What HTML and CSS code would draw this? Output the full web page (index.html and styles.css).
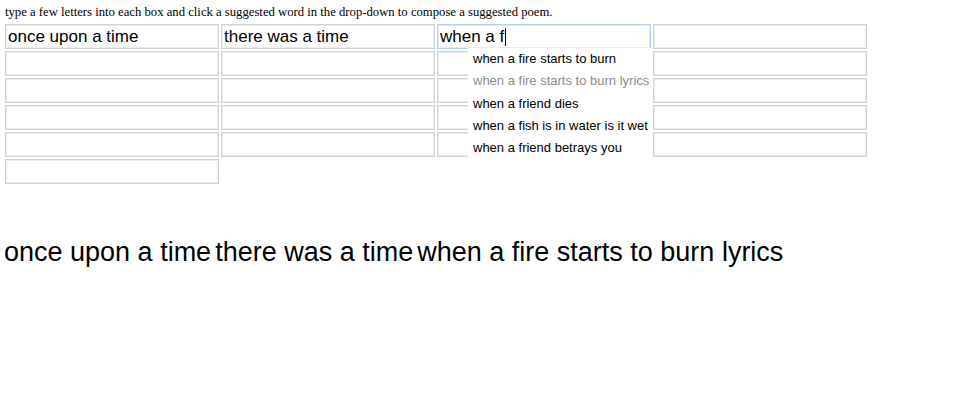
FILE: index.html
```html
<!DOCTYPE html>
<html>
<head>
<meta charset="utf-8">
<link rel="stylesheet" href="styles.css">
</head>
<body>
<p class="intro">type a few letters into each box and click a suggested word in the drop-down to compose a suggested poem.</p>
<div class="boxes">
  <input class="box" value="once upon a time">
  <input class="box" value="there was a time">
  <div class="field-wrap">
    <div class="box focused">when a f<span class="caret"></span></div>
    <ul class="suggest">
      <li>when a fire starts to burn</li>
      <li class="active">when a fire starts to burn lyrics</li>
      <li>when a friend dies</li>
      <li>when a fish is in water is it wet</li>
      <li>when a friend betrays you</li>
    </ul>
  </div>
  <input class="box" value="">
  <input class="box" value=""><input class="box" value=""><input class="box" value=""><input class="box" value="">
  <input class="box" value=""><input class="box" value=""><input class="box" value=""><input class="box" value="">
  <input class="box" value=""><input class="box" value=""><input class="box" value=""><input class="box" value="">
  <input class="box" value=""><input class="box" value=""><input class="box" value=""><input class="box" value="">
  <input class="box" value="">
</div>
<div class="poem"><span class="line">once upon a time</span><span class="line">there was a time</span><span class="line">when a fire starts to burn lyrics</span></div>
</body>
</html>
```
FILE: styles.css
```css
html, body {
  background: #fff;
}
body {
  margin: 0 5px;
  font-family: "Liberation Serif", "Times New Roman", serif;
  color: #000;
}
.intro {
  margin: 0;
  padding-top: 5px;
  height: 19px;
  font-size: 12.7px;
  line-height: 14px;
}
.boxes {
  display: flex;
  flex-wrap: wrap;
  column-gap: 2px;
  row-gap: 2px;
  width: 866px;
}
.box {
  box-sizing: border-box;
  width: 214px;
  height: 25px;
  margin: 0;
  padding: 0 2px;
  border: 1px solid #d2d2d2;
  box-shadow: inset 0 0 0 1px #ececec;
  background: #fff;
  font-family: "Liberation Sans", Arial, sans-serif;
  font-size: 17px;
  color: #000;
  outline: none;
  border-radius: 0;
}
.field-wrap {
  position: relative;
  width: 214px;
  height: 25px;
}
.focused {
  display: flex;
  align-items: center;
  border-color: #b4d0f0;
  box-shadow: inset 0 0 0 1px #e3edf9;
  white-space: pre;
}
.caret {
  display: inline-block;
  width: 1px;
  height: 18px;
  margin-left: 1px;
  background: #000;
}
.suggest {
  position: absolute;
  left: 31px;
  top: 24px;
  width: 183px;
  margin: 0;
  padding: 0;
  list-style: none;
  background: #fff;
  z-index: 2;
  font-family: "Liberation Sans", Arial, sans-serif;
  font-size: 13px;
}
.suggest li {
  height: 22.3px;
  line-height: 22px;
  padding-left: 5px;
  color: #000;
  white-space: nowrap;
}
.suggest li.active {
  color: #8c8c8c;
}
.poem {
  margin-top: 53px;
  font-family: "Liberation Sans", Arial, sans-serif;
  font-size: 27px;
  line-height: 31px;
  margin-left: -1px;
}
.line {
  margin-right: 4px;
}
```
